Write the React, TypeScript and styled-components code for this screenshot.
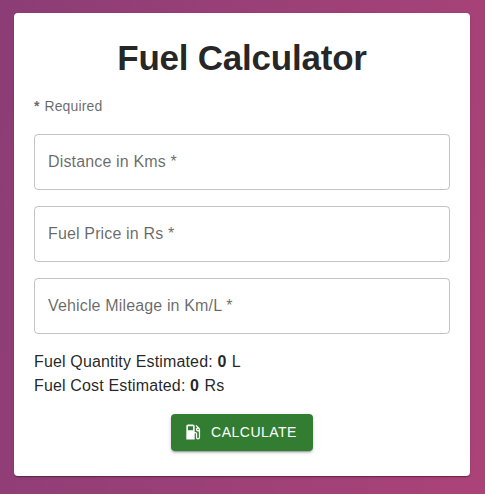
import React from "react";
import styled, { createGlobalStyle } from "styled-components";
import { MdLocalGasStation } from "react-icons/md";

const GlobalStyle = createGlobalStyle`
  *, *::before, *::after { box-sizing: border-box; }
  body {
    margin: 0;
    font-family: "Liberation Sans", Arial, sans-serif;
    color: rgba(0, 0, 0, 0.87);
  }
`;

const Page = styled.main`
  min-height: 100vh;
  padding: 13px 15px 18px 14px;
  display: flex;
  background: linear-gradient(100deg, #8c3d76 0%, #ab4378 100%);
`;

const Card = styled.form`
  flex: 1;
  display: flex;
  flex-direction: column;
  padding: 20px;
  background: #fff;
  border-radius: 4px;
  box-shadow: 0 2px 1px -1px rgba(0, 0, 0, 0.2), 0 1px 1px 0 rgba(0, 0, 0, 0.14),
    0 1px 3px 0 rgba(0, 0, 0, 0.12);
`;

const Title = styled.h1`
  margin: 4px 0 0;
  font-size: 35px;
  line-height: 42px;
  font-weight: 700;
  letter-spacing: -0.22px;
  text-align: center;
`;

const Strong = styled.strong`
  letter-spacing: 0.9px;
`;

const RequiredNote = styled.p`
  margin: 17px 0 18px;
  font-size: 14px;
  line-height: 20px;
  letter-spacing: 0.15px;
  color: rgba(0, 0, 0, 0.6);
`;

const Fields = styled.div`
  display: grid;
  gap: 16px;
`;

const Field = styled.label`
  position: relative;
  display: block;
  height: 56px;
`;

const FieldInput = styled.input`
  width: 100%;
  height: 100%;
  padding: 16px 13px;
  border: 1px solid rgba(0, 0, 0, 0.23);
  border-radius: 4px;
  outline: 0;
  background: transparent;
  font: 16px/23px "Liberation Sans", Arial, sans-serif;
  letter-spacing: 0.15px;
`;

const FieldLabel = styled.span`
  position: absolute;
  left: 14px;
  top: 16px;
  font-size: 16px;
  line-height: 23px;
  letter-spacing: 0.15px;
  color: rgba(0, 0, 0, 0.6);
  pointer-events: none;
`;

const Results = styled.div`
  margin-top: 16px;
  font-size: 16px;
  line-height: 24px;
  letter-spacing: 0.15px;
`;

const CalculateButton = styled.button`
  align-self: center;
  display: inline-flex;
  align-items: center;
  gap: 8px;
  height: 37px;
  margin-top: 16px;
  padding: 0 16px 2px 12px;
  border: 0;
  border-radius: 4px;
  background: #337d33;
  color: #fff;
  font: 14px/24px "Liberation Sans", Arial, sans-serif;
  letter-spacing: 0.5px;
  text-transform: uppercase;
  box-shadow: 0 3px 1px -2px rgba(0, 0, 0, 0.2), 0 2px 2px 0 rgba(0, 0, 0, 0.14),
    0 1px 5px 0 rgba(0, 0, 0, 0.12);
`;

const fields = ["Distance in Kms", "Fuel Price in Rs", "Vehicle Mileage in Km/L"];

const results = [
  { label: "Fuel Quantity Estimated", value: 0, unit: "L" },
  { label: "Fuel Cost Estimated", value: 0, unit: "Rs" },
];

export default function App() {
  return (
    <>
      <GlobalStyle />
      <Page>
        <Card>
          <Title>Fuel Calculator</Title>
          <RequiredNote>
            <Strong>*</Strong> Required
          </RequiredNote>
          <Fields>
            {fields.map((label) => (
              <Field key={label}>
                <FieldInput />
                <FieldLabel>{label} *</FieldLabel>
              </Field>
            ))}
          </Fields>
          <Results>
            {results.map(({ label, value, unit }) => (
              <div key={label}>
                {label}: <Strong>{value}</Strong> {unit}
              </div>
            ))}
          </Results>
          <CalculateButton type="button">
            <MdLocalGasStation size={20} />
            Calculate
          </CalculateButton>
        </Card>
      </Page>
    </>
  );
}
